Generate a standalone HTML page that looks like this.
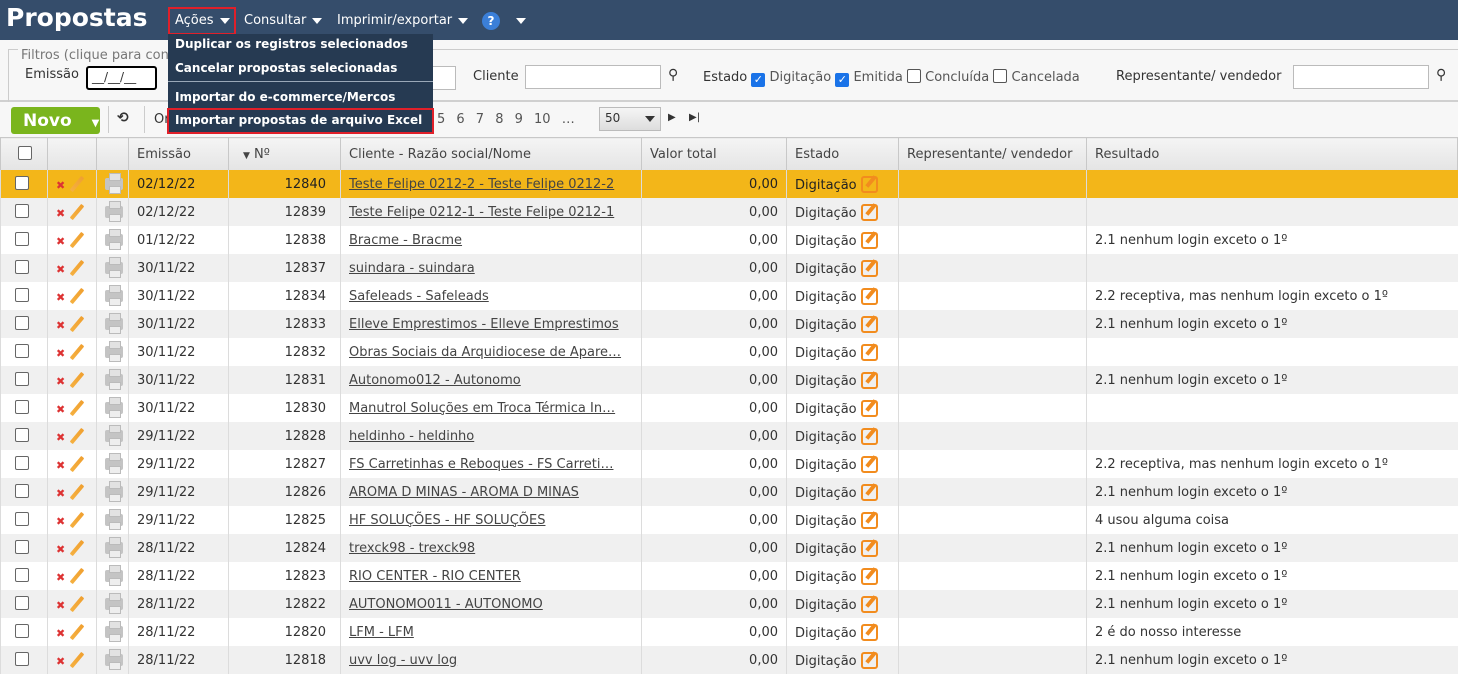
<!DOCTYPE html>
<html><head><meta charset="utf-8"><style>
*{box-sizing:border-box;margin:0;padding:0}
body{width:1458px;height:670px;overflow:hidden;font-family:"DejaVu Sans","Liberation Sans",sans-serif;font-size:12px;color:#333;background:#fff;position:relative}
.hdr{position:absolute;left:0;top:0;width:1458px;height:40px;background:#354d6b}
.title{position:absolute;left:6px;top:3px;font:bold 25px "DejaVu Sans",sans-serif;color:#fff}
.mi{position:absolute;top:13px;color:#fff;font-size:13px}
.tri{display:inline-block;width:0;height:0;border-left:5px solid transparent;border-right:5px solid transparent;border-top:6px solid #fff;vertical-align:middle;margin-left:6px}
.filt{position:absolute;left:0;top:40px;width:1458px;height:62px;background:#f7f7f7;border-bottom:2px solid #d0d0d0}
.fs{position:absolute;left:8px;top:9px;right:0;height:60px;border-top:1px solid #ccc;border-left:1px solid #ccc}
.abs{position:absolute}
.inp{position:absolute;background:#fff;border:1px solid #bbb;height:24px}
.cb{display:inline-block;width:14px;height:14px;border:1px solid #555;border-radius:2px;background:#fff;vertical-align:-2px}
.cbc{background:#1a73e8;border-color:#1a73e8;color:#fff;font-size:11px;line-height:12px;text-align:center}
.tb{position:absolute;left:0;top:102px;width:1458px;height:35px;background:#f7f7f7}
.novo{position:absolute;left:11px;top:5px;width:89px;height:27px;background:#7ab51d;border-radius:3px;color:#fff;font:bold 17px "DejaVu Sans",sans-serif;padding:4px 0 0 12px}
table{position:absolute;left:0;top:137px;border-collapse:collapse;table-layout:fixed;width:1458px}
th{height:33px;background:linear-gradient(#f4f4f4,#e4e4e4);border:1px solid #c8c8c8;font-weight:normal;text-align:left;padding-left:8px;color:#444;font-size:13px}
td{height:28px;border-left:1px solid #dcdcdc;padding-left:8px;white-space:nowrap;overflow:hidden;font-size:13px}
tr.o td{background:#fff}tr.e td{background:#f0f0f0}
tr.sel td{background:#f3b619;color:#222}
td a{color:#444;text-decoration:underline}
.r{text-align:right;padding-right:14px}
.x{color:#d33;font-weight:bold;font-size:11px}
.pen{display:inline-block;width:4px;height:18px;background:linear-gradient(#f0a030,#f5b040);transform:rotate(40deg);margin-left:10px;vertical-align:-4px;border-radius:1px}
.pr{display:inline-block;width:18px;height:12px;background:#c4c4c4;border-radius:2px;position:relative;vertical-align:-2px}
.pr:before{content:"";position:absolute;left:4px;top:-5px;width:10px;height:6px;background:#e2e2e2;border:1px solid #bbb}
.pr:after{content:"";position:absolute;left:4px;top:8px;width:10px;height:6px;background:#eee;border:1px solid #bbb}
.ed{display:inline-block;width:17px;height:17px;border:2px solid #f28c1e;border-radius:3px;vertical-align:-4px;margin-left:4px;position:relative}
.ed:after{content:"";position:absolute;left:6px;top:-3px;width:4px;height:13px;background:#f28c1e;transform:rotate(40deg)}
.menu{position:absolute;left:168px;top:34px;width:265px;height:100px;background:#263a52;color:#fff;font-weight:bold;font-size:12px;white-space:nowrap}
.menu div{position:absolute;left:7px}
</style></head><body>
<div class="hdr">
<div class="title">Propostas</div>
<div class="mi" style="left:175px">Ações<span class="tri"></span></div>
<div class="abs" style="left:168px;top:7px;width:68px;height:28px;border:2px solid #e0202a"></div>
<div class="mi" style="left:244px">Consultar<span class="tri"></span></div>
<div class="mi" style="left:337px">Imprimir/exportar<span class="tri"></span></div>
<div class="abs" style="left:482px;top:12px;width:18px;height:18px;border-radius:50%;background:#3b7fd8;color:#fff;font-weight:bold;font-size:12px;text-align:center;line-height:18px">?</div>
<div class="abs" style="left:510px;top:13px"><span class="tri"></span></div>
</div>
<div class="filt">
<div class="fs"></div>
<div class="abs" style="left:18px;top:8px;color:#777;background:#f7f7f7;padding:0 3px;font-size:13px">Filtros (clique para con</div>
<div class="abs" style="left:25px;top:27px;font-size:13px">Emissão</div>
<div class="inp" style="left:86px;top:26px;width:71px;border:2px solid #000;border-radius:3px;padding:2px 4px">__/__/__</div>
<div class="inp" style="left:430px;top:26px;width:26px"></div>
<div class="abs" style="left:473px;top:29px;font-size:13px">Cliente</div>
<div class="inp" style="left:525px;top:25px;width:136px"></div>
<div class="abs" style="left:668px;top:27px;font-size:14px">&#9906;</div>
<div class="abs" style="left:703px;top:29px;font-size:13px;white-space:nowrap">Estado <span class="cb cbc">✓</span> <span style="color:#555">Digitação</span> <span class="cb cbc">✓</span> <span style="color:#555">Emitida</span> <span class="cb"></span> <span style="color:#555">Concluída</span> <span class="cb"></span> <span style="color:#555">Cancelada</span></div>
<div class="abs" style="left:1116px;top:29px;font-size:13px;white-space:nowrap">Representante/ vendedor</div>
<div class="inp" style="left:1293px;top:25px;width:136px"></div>
<div class="abs" style="left:1436px;top:27px;font-size:14px">&#9906;</div>
</div>
<div class="tb">
<div class="novo">Novo <span style="font-size:10px;margin-left:14px">▼</span></div>
<div class="abs" style="left:108px;top:4px;width:1px;height:27px;background:#ccc"></div>
<div class="abs" style="left:117px;top:8px;font-weight:bold;font-size:14px">⟲</div>
<div class="abs" style="left:144px;top:4px;width:1px;height:27px;background:#ccc"></div>
<div class="abs" style="left:154px;top:10px;font-size:13px">Or</div>
<div class="abs" style="left:437px;top:10px;color:#555;word-spacing:7px;font-size:13px">5 6 7 8 9 10 …</div>
<div class="abs" style="left:599px;top:5px;width:62px;height:24px;border:1px solid #bbb;background:linear-gradient(#f5f5f5,#ddd);padding:3px 5px">50<span style="position:absolute;right:5px;top:8px;border-left:5px solid transparent;border-right:5px solid transparent;border-top:6px solid #333"></span></div>
<div class="abs" style="left:668px;top:10px;font-size:10px">▶</div>
<div class="abs" style="left:689px;top:10px;font-size:10px">▶|</div>
</div>
<table>
<colgroup><col style="width:47px"><col style="width:49px"><col style="width:32px"><col style="width:100px"><col style="width:112px"><col style="width:301px"><col style="width:145px"><col style="width:112px"><col style="width:188px"><col></colgroup>
<tr><th style="padding-left:17px"><span class="cb" style="border-color:#666"></span></th><th></th><th></th><th>Emissão</th><th style="padding-left:14px"><span style="font-size:9px">▼</span> Nº</th><th>Cliente - Razão social/Nome</th><th>Valor total</th><th>Estado</th><th>Representante/ vendedor</th><th>Resultado</th></tr>
</table>
<table style="top:170px" id="b">
<colgroup><col style="width:47px"><col style="width:49px"><col style="width:32px"><col style="width:100px"><col style="width:112px"><col style="width:301px"><col style="width:145px"><col style="width:112px"><col style="width:188px"><col></colgroup>
</table>
<div class="menu">
<div style="top:3px">Duplicar os registros selecionados</div>
<div style="top:27px">Cancelar propostas selecionadas</div>
<div style="left:0;top:47px;width:265px;height:1px;background:#9aa8b8"></div>
<div style="top:56px">Importar do e-commerce/Mercos</div>
<div style="top:79px">Importar propostas de arquivo Excel</div>
</div>
<div class="abs" style="left:167px;top:108px;width:267px;height:26px;border:2px solid #e0202a"></div>
<script>
var d=[["02/12/22","12840","Teste Felipe 0212-2 - Teste Felipe 0212-2",""],["02/12/22","12839","Teste Felipe 0212-1 - Teste Felipe 0212-1",""],["01/12/22","12838","Bracme - Bracme","2.1 nenhum login exceto o 1º"],["30/11/22","12837","suindara - suindara",""],["30/11/22","12834","Safeleads - Safeleads","2.2 receptiva, mas nenhum login exceto o 1º"],["30/11/22","12833","Elleve Emprestimos - Elleve Emprestimos","2.1 nenhum login exceto o 1º"],["30/11/22","12832","Obras Sociais da Arquidiocese de Apare…",""],["30/11/22","12831","Autonomo012 - Autonomo","2.1 nenhum login exceto o 1º"],["30/11/22","12830","Manutrol Soluções em Troca Térmica In…",""],["29/11/22","12828","heldinho - heldinho",""],["29/11/22","12827","FS Carretinhas e Reboques - FS Carreti…","2.2 receptiva, mas nenhum login exceto o 1º"],["29/11/22","12826","AROMA D MINAS - AROMA D MINAS","2.1 nenhum login exceto o 1º"],["29/11/22","12825","HF SOLUÇÕES - HF SOLUÇÕES","4 usou alguma coisa"],["28/11/22","12824","trexck98 - trexck98","2.1 nenhum login exceto o 1º"],["28/11/22","12823","RIO CENTER - RIO CENTER","2.1 nenhum login exceto o 1º"],["28/11/22","12822","AUTONOMO011 - AUTONOMO","2.1 nenhum login exceto o 1º"],["28/11/22","12820","LFM - LFM","2 é do nosso interesse"],["28/11/22","12818","uvv log - uvv log","2.1 nenhum login exceto o 1º"]];
var h="";d.forEach(function(r,i){h+='<tr class="'+(i==0?'sel':(i%2?'e':'o'))+'"><td style="padding-left:14px"><span class="cb" style="border-color:#666"></span></td><td><span class="x">✖</span><span class="pen"></span></td><td><span class="pr"></span></td><td>'+r[0]+'</td><td class="r">'+r[1]+'</td><td><a>'+r[2]+'</a></td><td class="r" style="padding-right:8px">0,00</td><td>Digitação<span class="ed"></span></td><td></td><td>'+r[3]+'</td></tr>'});
document.getElementById("b").insertAdjacentHTML("beforeend",h);
</script>
</body></html>
